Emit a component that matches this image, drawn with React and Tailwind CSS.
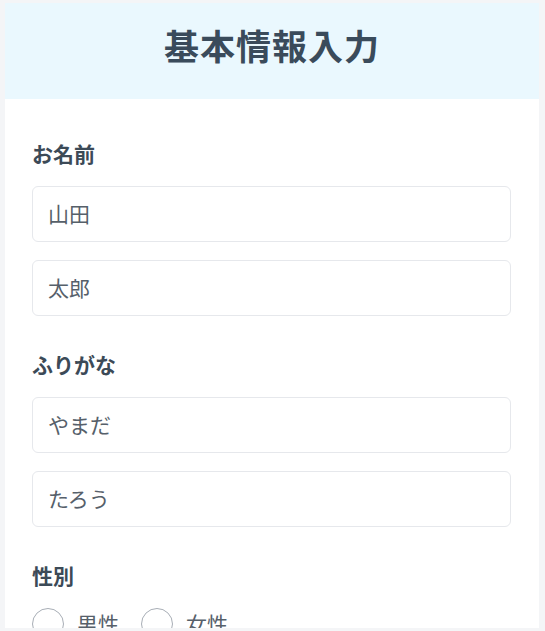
export default function App() {
  const font = { fontFamily: '"Noto Sans CJK JP", "Noto Sans", sans-serif' };
  const Input = ({ value }) => (
    <div className="h-[56px] w-full rounded-[6px] border border-[#e6e8ec] bg-white pl-[15px] flex items-center text-[21px] text-[#56606a]">
      {value}
    </div>
  );
  const Label = ({ children }) => (
    <div className="text-[21px] leading-[28px] font-bold text-[#3c4a57]">{children}</div>
  );
  return (
    <div style={font} className="h-[631px] w-[545px] bg-[#f4f5f7] pl-[5px] pr-[6px] pt-[3px] pb-[3px]">
      <div className="h-full bg-white overflow-hidden">
        <div className="h-[96px] bg-[#eaf8fe] flex items-center justify-center pb-[12px]">
          <h1 className="text-[35px] font-bold text-[#3a4b5b] tracking-[1px]">基本情報入力</h1>
        </div>
        <div className="pl-[27px] pr-[28px] pt-[40px] flex flex-col">
          <Label>お名前</Label>
          <div className="mt-[19px] flex flex-col gap-[18px]">
            <Input value="山田" />
            <Input value="太郎" />
          </div>
          <div className="mt-[34px]"><Label>ふりがな</Label></div>
          <div className="mt-[19px] flex flex-col gap-[18px]">
            <Input value="やまだ" />
            <Input value="たろう" />
          </div>
          <div className="mt-[34px]"><Label>性別</Label></div>
          <div className="mt-[19px] flex items-center">
            <div className="w-[32px] h-[32px] rounded-full border-[1.5px] border-[#a8aeb6]" />
            <span className="ml-[13px] text-[21px] text-[#56606a]">男性</span>
            <div className="ml-[22px] w-[32px] h-[32px] rounded-full border-[1.5px] border-[#a8aeb6]" />
            <span className="ml-[13px] text-[21px] text-[#56606a]">女性</span>
          </div>
        </div>
      </div>
    </div>
  );
}
